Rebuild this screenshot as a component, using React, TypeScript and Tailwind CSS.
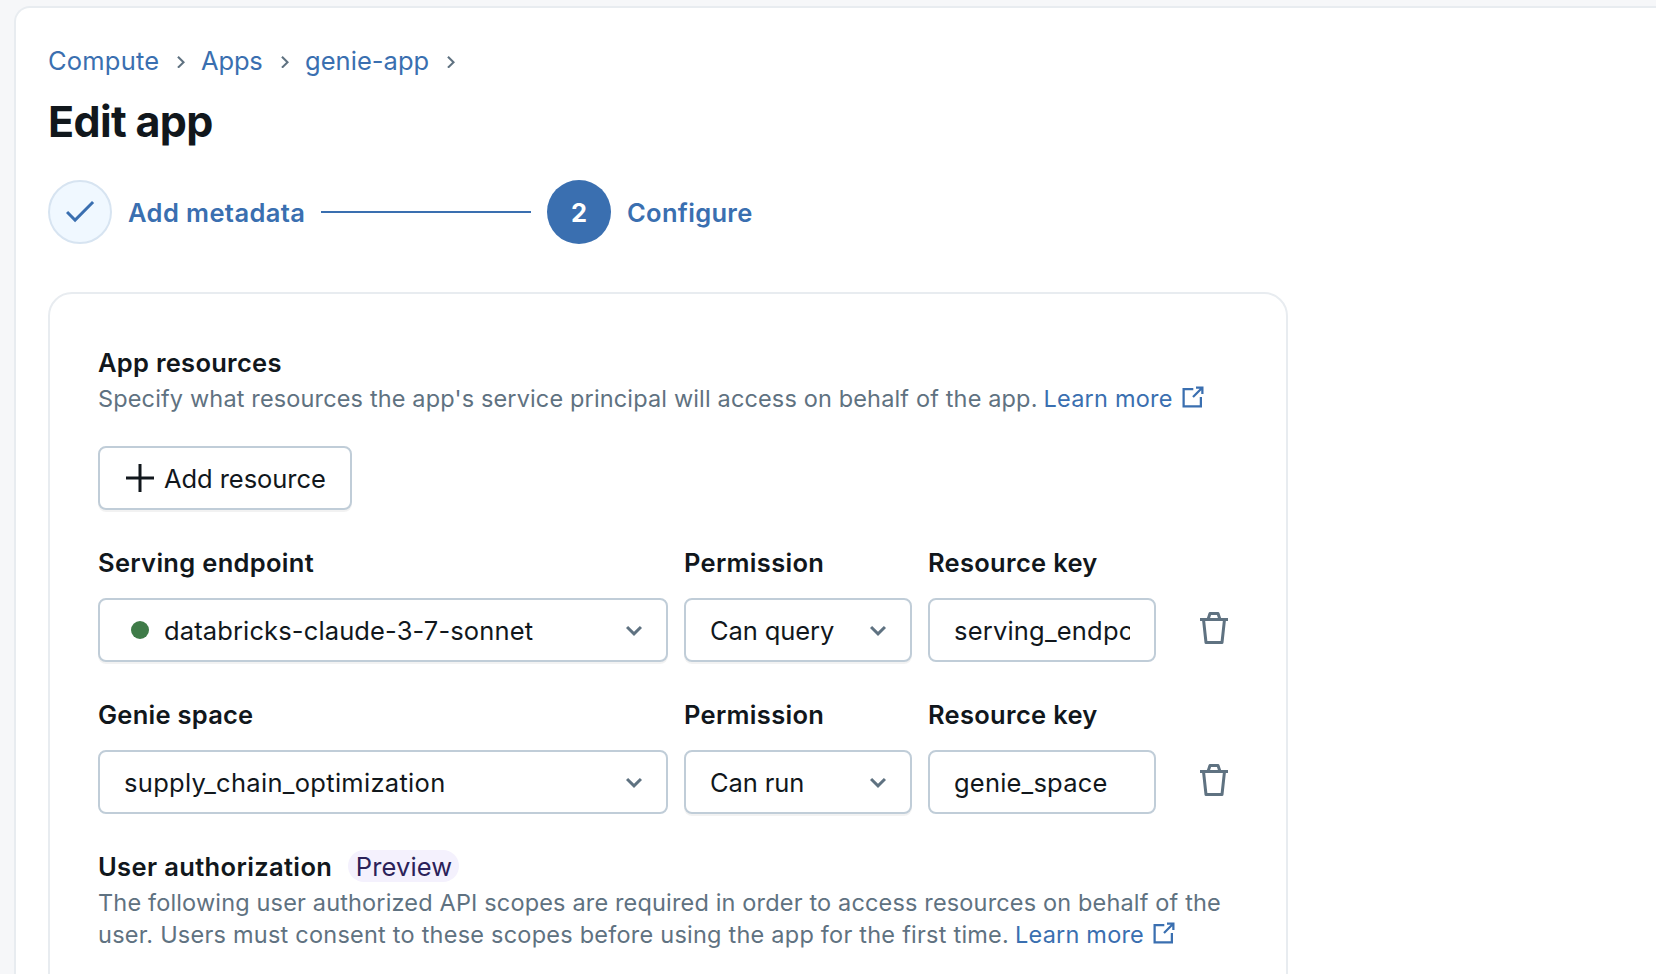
import type { ReactNode } from "react";

function Icon({ d, className }: { d: string; className: string }) {
  return (
    <svg viewBox="0 0 16 16" fill="currentColor" fillRule="evenodd" className={`shrink-0 ${className}`} aria-hidden="true">
      <path d={d} />
    </svg>
  );
}

const CHECK = "m15.06 3.56-9.53 9.531L1 8.561 2.06 7.5l3.47 3.47L14 2.5z";
const PLUS = "M7.25 7.25V1h1.5v6.25H15v1.5H8.75V15h-1.5V8.75H1v-1.5z";
const CHEVRON_DOWN = "M8 8.917 10.947 6 12 7.042 8 11 4 7.042 5.053 6z";
const TRASH =
  "M6 0a.75.75 0 0 0-.712.513L4.46 3H1v1.5h1.077l1.177 10.831A.75.75 0 0 0 4 16h8a.75.75 0 0 0 .746-.669L13.923 4.5H15V3h-3.46L10.712.513A.75.75 0 0 0 10 0zm3.96 3-.5-1.5H6.54L6.04 3zM3.586 4.5l1.087 10h6.654l1.087-10z";
const EXTERNAL =
  "M10 1h5v5h-1.5V3.56L8.53 8.53 7.47 7.47l4.97-4.97H10zM1 2h7.2v1.5H2.5v10h10V8H14v7H1z";

function CrumbChevron({ className }: { className: string }) {
  return (
    <svg viewBox="0 0 8 12.4" className={`h-[12.4px] w-2 shrink-0 text-[#5f7281] ${className}`} fill="currentColor" aria-hidden="true">
      <path d="M5.1 6.2.2 1.5 1.7 0 8 6.2 1.7 12.4.2 10.9z" />
    </svg>
  );
}

function LearnMore() {
  return (
    <a className="ml-1.5 whitespace-nowrap tracking-[0.2px] text-[#3a6fb0]">
      Learn more
      <Icon d={EXTERNAL} className="relative -top-0.5 ml-2 inline-block size-6 align-[-4px]" />
    </a>
  );
}

function Select({ children, className = "" }: { children: ReactNode; className?: string }) {
  return (
    <button
      className={`flex h-16 w-full items-center justify-between rounded-lg border-2 border-[#c0cdd8] bg-white pr-4 pl-6 text-left ${className}`}
    >
      <span className="flex items-center gap-2">{children}</span>
      <Icon d={CHEVRON_DOWN} className="size-8 text-[#5f7281]" />
    </button>
  );
}

function Field({ label, labelClass, className, children }: { label: string; labelClass: string; className: string; children: ReactNode }) {
  return (
    <div className={className}>
      <div className={`mb-4 pt-0.5 leading-[38px] font-[630] ${labelClass}`}>{label}</div>
      {children}
    </div>
  );
}

interface ResourceRowProps {
  label: string;
  labelClass: string;
  value: ReactNode;
  valueClass: string;
  permission: string;
  resourceKey: string;
}

function ResourceRow({ label, labelClass, value, valueClass, permission, resourceKey }: ResourceRowProps) {
  return (
    <div className="mt-8 flex gap-4">
      <Field label={label} labelClass={labelClass} className="w-[570px]">
        <Select className={valueClass}>{value}</Select>
      </Field>
      <Field label="Permission" labelClass="tracking-[0.3px]" className="w-[228px]">
        <Select className="shadow-[0_2px_0_rgba(0,0,0,0.05)]">
          <span className="pt-0.5 leading-[38px] tracking-[-0.1px]">{permission}</span>
        </Select>
      </Field>
      <Field label="Resource key" labelClass="tracking-[0.3px]" className="w-[228px]">
        <input
          readOnly
          value={resourceKey}
          className="block h-16 w-full rounded-lg border-2 border-[#c0cdd8] bg-white px-6 leading-10 tracking-[0.2px] outline-none"
        />
      </Field>
      <button className="mt-[70px] ml-[26px] size-8 self-start text-[#5f7281]" aria-label="Delete">
        <Icon d={TRASH} className="size-8" />
      </button>
    </div>
  );
}

export default function App() {
  return (
    <div className="flex h-[974px] w-full overflow-hidden bg-[#f6f7f9] pt-1.5 pl-3.5 font-['Inter','Liberation_Sans',sans-serif] text-[25.5px] font-[420] text-[#11171c]">
      <main className="h-[1100px] flex-1 rounded-tl-2xl border-t-2 border-l-2 border-[#e8ecf0] bg-white px-8 pt-8">
        <nav className="flex h-10 items-center pt-0.5 leading-[38px] text-[#3a6fb0]">
          <a className="w-[112px] tracking-[0.2px]">Compute</a>
          <CrumbChevron className="mt-0.5 ml-[17px]" />
          <a className="ml-4 w-[62px] tracking-[-0.15px]">Apps</a>
          <CrumbChevron className="mt-0.5 ml-[18px]" />
          <a className="ml-4 w-[125px] tracking-[0.04px]">genie-app</a>
          <CrumbChevron className="mt-0.5 ml-[17px]" />
        </nav>

        <h1 className="mt-[13px] text-[43px] leading-[56px] font-[650] tracking-[-0.65px]">Edit app</h1>

        <div className="mt-[31px] flex h-16 items-center gap-4 leading-[38px] font-[630] text-[#3a6fb0]">
          <span className="flex size-16 items-center justify-center rounded-full border-2 border-[#d7e4f1] bg-[#f0f8ff]">
            <Icon d={CHECK} className="size-8" />
          </span>
          <span className="w-[177px] pt-0.5 tracking-[0.4px] whitespace-nowrap">Add metadata</span>
          <span className="h-0.5 w-[210px] bg-[#3a6fb0]" />
          <span className="flex size-16 items-center justify-center rounded-full bg-[#3a6fb0] pt-0.5 font-bold text-white">2</span>
          <span className="pt-0.5 tracking-[0.3px]">Configure</span>
        </div>

        <section className="mt-12 h-[800px] w-[1240px] rounded-3xl border-2 border-[#e8ecf0] px-12 pt-12">
          <h2 className="pt-0.5 leading-[38px] font-[630] tracking-[0.28px]">App resources</h2>
          <p className="pt-px text-[23.5px] leading-8 whitespace-nowrap text-[#5f7281]">
            <span className="tracking-[0.145px]">
              Specify what resources the app's service principal will access on behalf of the app.
            </span>
            <LearnMore />
          </p>

          <button className="mt-[31px] flex h-16 w-[254px] items-center gap-2 rounded-lg border-2 border-[#c0cdd8] bg-white pl-6 leading-[38px] tracking-[-0.06px] whitespace-nowrap shadow-[0_2px_0_rgba(0,0,0,0.05)]">
            <Icon d={PLUS} className="size-8" />
            <span className="pt-0.5">Add resource</span>
          </button>

          <ResourceRow
            label="Serving endpoint"
            labelClass="tracking-[0.31px]"
            value={
              <>
                <span className="flex size-8 items-center justify-center">
                  <span className="size-[18px] rounded-full bg-[#3f7b48]" />
                </span>
                <span className="pt-0.5 leading-[38px] tracking-[0.13px]">databricks-claude-3-7-sonnet</span>
              </>
            }
            valueClass="shadow-[0_2px_0_rgba(0,0,0,0.05)]"
            permission="Can query"
            resourceKey="serving_endpoint"
          />
          <ResourceRow
            label="Genie space"
            labelClass="tracking-[0.25px]"
            value={<span className="pt-0.5 leading-[38px] tracking-[0.3px]">supply_chain_optimization</span>}
            valueClass=""
            permission="Can run"
            resourceKey="genie_space"
          />

          <div className="mt-8 flex h-10 items-center">
            <h2 className="w-[250px] pt-0.5 leading-[38px] font-[630] tracking-[0.36px] whitespace-nowrap">
              User authorization
            </h2>
            <span className="flex h-8 w-[111px] items-center justify-center rounded-full bg-[#f4f1fd] pt-0.5 pl-px leading-[30px] tracking-[0.1px] text-[#2b2259]">
              Preview
            </span>
          </div>
          <p className="pt-px text-[23.5px] leading-8 whitespace-nowrap text-[#5f7281]">
            <span className="tracking-[0.157px]">
              The following user authorized API scopes are required in order to access resources on behalf of the
            </span>
            <br />
            <span className="tracking-[0.23px]">
              user. Users must consent to these scopes before using the app for the first time.
            </span>
            <LearnMore />
          </p>
        </section>
      </main>
    </div>
  );
}
